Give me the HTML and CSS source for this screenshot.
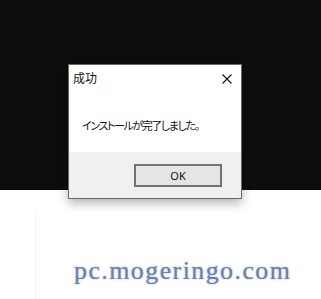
FILE: index.html
```html
<!DOCTYPE html>
<html lang="ja">
<head>
<meta charset="utf-8">
<link rel="stylesheet" href="styles.css">
</head>
<body>
<div class="screen">
  <div class="desktop"></div>
  <div class="page">
    <div class="rule"></div>
    <div class="watermark">pc.mogeringo.com</div>
  </div>
  <div class="dialog">
    <div class="titlebar">
      <span class="title">成功</span>
      <svg class="close" width="10" height="10" viewBox="0 0 10 10"><path d="M0.5 0.5 L9.5 9.5 M9.5 0.5 L0.5 9.5" stroke="#111" stroke-width="1.1" fill="none"/></svg>
    </div>
    <div class="body">
      <p class="message">インストールが完了しました。</p>
    </div>
    <div class="footer">
      <button class="ok">OK</button>
    </div>
  </div>
</div>
</body>
</html>
```
FILE: styles.css
```css
html, body {
  margin: 0;
  padding: 0;
  background: #ffffff;
}
.screen {
  position: relative;
  width: 321px;
  height: 299px;
  overflow: hidden;
  font-family: "Noto Sans CJK JP", "Noto Sans", sans-serif;
}
.desktop {
  height: 190px;
  background: #0d0d0d;
}
.page {
  position: relative;
  height: 109px;
  background: #ffffff;
}
.rule {
  position: absolute;
  left: 35px;
  top: 20px;
  bottom: 0;
  width: 1px;
  background: #f3f3f3;
}
.watermark {
  padding: 66px 0 0 74px;
  font-family: "Liberation Serif", serif;
  font-size: 26px;
  line-height: 30px;
  color: #6f7fa7;
  text-shadow: 0 0 3px #c2cbe0, 0 0 1px #aab6d3;
  letter-spacing: 1.4px;
}
.dialog {
  position: absolute;
  left: 68px;
  top: 64px;
  width: 172px;
  height: 133px;
  border: 1px solid #666;
  background: #ffffff;
  display: flex;
  flex-direction: column;
  box-shadow: 0 4px 10px rgba(0,0,0,0.3);
}
.titlebar {
  display: flex;
  align-items: center;
  justify-content: space-between;
  height: 20px;
  padding: 3px 9px 0 4px;
}
.title {
  font-size: 12px;
  color: #111;
  line-height: 14px;
}
.close {
  display: block;
  margin-top: 1px;
}
.body {
  flex: 1;
}
.message {
  margin: 30px 0 0 13px;
  font-size: 11px;
  line-height: 14px;
  color: #111;
  font-feature-settings: "palt";
  letter-spacing: -1.4px;
}
.footer {
  height: 46px;
  background: #f0f0f0;
  display: flex;
  justify-content: flex-end;
  align-items: flex-start;
  padding-right: 19px;
}
.ok {
  margin-top: 12px;
  width: 88px;
  height: 23px;
  box-sizing: border-box;
  border: 2px solid #737373;
  background: #e5e5e5;
  font-family: "Noto Sans", "Liberation Sans", sans-serif;
  font-size: 11px;
  color: #111;
  padding: 0;
}
```
